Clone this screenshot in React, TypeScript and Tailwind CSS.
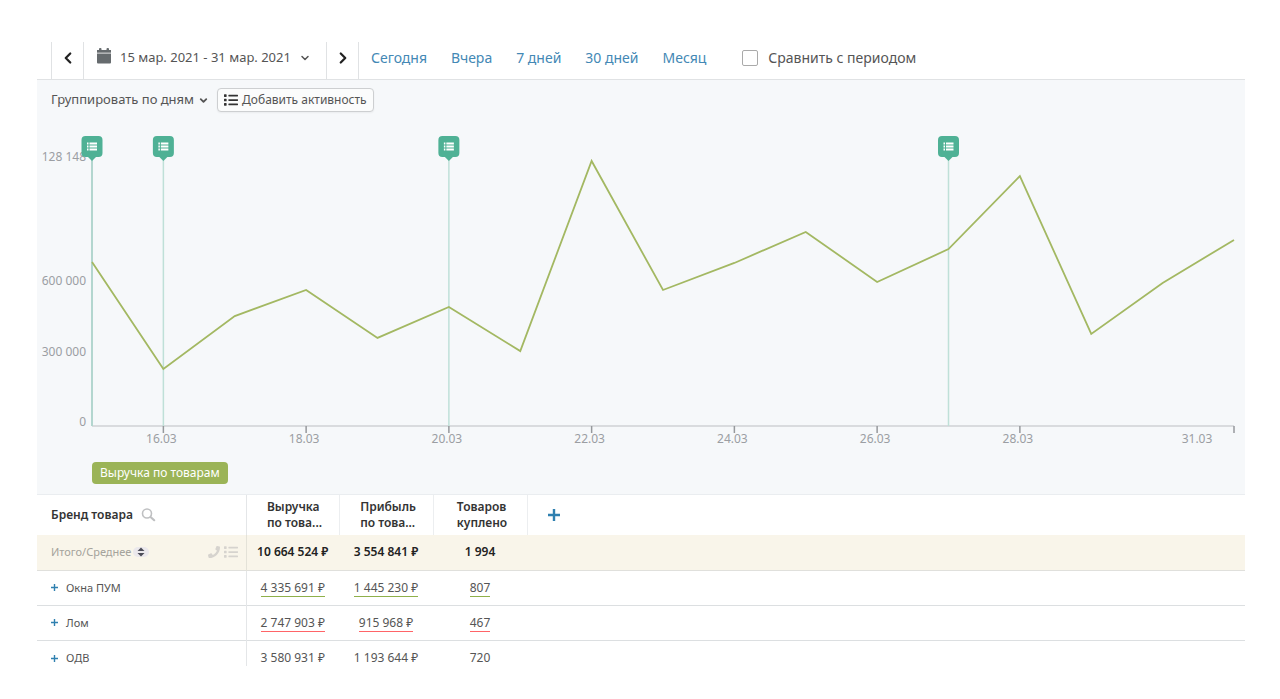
import { useState } from 'react';
import { ChevronDown, ChevronLeft, ChevronRight } from 'lucide-react';
import { FaList, FaPhone } from 'react-icons/fa';

type Trend = 'up' | 'down' | 'none';

interface BrandRow {
  name: string;
  values: string[];
  trend: Trend;
}

const periods = ['Сегодня', 'Вчера', '7 дней', '30 дней', 'Месяц'];

// Daily revenue, thousands of roubles, 15.03 - 31.03
const revenue = [698, 243, 468, 579, 375, 507, 319, 1128, 579, 694, 826, 613, 753, 1064, 392, 609, 792];
const activityDays = [0, 1, 5, 12];

const columns = [
  ['Выручка', 'по това...'],
  ['Прибыль', 'по това...'],
  ['Товаров', 'куплено']
];

const totals = ['10 664 524 ₽', '3 554 841 ₽', '1 994'];

const brands: BrandRow[] = [
  { name: 'Окна ПУМ', values: ['4 335 691 ₽', '1 445 230 ₽', '807'], trend: 'up' },
  { name: 'Лом', values: ['2 747 903 ₽', '915 968 ₽', '467'], trend: 'down' },
  { name: 'ОДВ', values: ['3 580 931 ₽', '1 193 644 ₽', '720'], trend: 'none' }
];

const trendClasses: Record<Trend, string> = {
  up: 'border-b border-[#8fb04a]',
  down: 'border-b border-red-400',
  none: ''
};

const CalendarIcon = () => (
  <svg width="16" height="16" viewBox="0 0 16 16" fill="#666b6e" className="mb-1" aria-hidden="true">
    <path d="M1 5.5h14v9a1 1 0 0 1-1 1H2a1 1 0 0 1-1-1z" />
    <path d="M1 2h14v2.700H1z" />
    <rect x="3" y="0" width="2.5" height="4" rx="1" />
    <rect x="10.500" y="0" width="2.5" height="4" rx="1" />
  </svg>
);

const SearchIcon = () => (
  <svg width="15" height="14" viewBox="0 0 15 14" fill="none" stroke="#bfc0c2" strokeLinecap="round" aria-hidden="true">
    <circle cx="6" cy="5.500" r="4.500" strokeWidth="1.600" />
    <path d="M9.800 9.200l3.400 3" strokeWidth="2.200" />
  </svg>
);

const PlusIcon = ({ size }: { size: number }) => (
  <svg width={size} height={size} viewBox="0 0 12 12" fill="#2f80b0" aria-hidden="true">
    <path d="M4.800 0h2.400v4.800H12v2.400H7.200V12H4.800V7.200H0V4.800h4.800z" />
  </svg>
);

const SortIcon = () => (
  <svg width="16" height="12" viewBox="0 0 16 12" aria-hidden="true">
    <rect y="1" width="16" height="10" rx="5" fill="#ebe8ec" />
    <path d="M8 1.500l3.500 3.500h-7zM8 10.500l3.500-3.500h-7z" fill="#4d4d59" />
  </svg>
);

const Toolbar = () => {
  const [compare, setCompare] = useState(false);

  return (
    <div className="flex h-[38px] items-stretch border-b border-[#e0e2e4] pl-3.5 text-[#555]">
      <button type="button" aria-label="Предыдущий период" className="flex w-8 items-center justify-center border-l border-[#e0e2e4] pb-1.5 text-[#222]">
        <ChevronLeft size={18} strokeWidth={3} />
      </button>
      <button type="button" className="flex w-[243px] items-center gap-2 border-l border-[#e0e2e4] pb-1.5 pl-3 text-[13px] whitespace-nowrap">
        <CalendarIcon />
        <span>15 мар. 2021 - 31 мар. 2021</span>
        <ChevronDown size={12} strokeWidth={3} />
      </button>
      <button type="button" aria-label="Следующий период" className="flex w-[33px] items-center justify-center border-x border-[#e0e2e4] pb-1.5 text-[#222]">
        <ChevronRight size={18} strokeWidth={3} />
      </button>
      <nav className="flex items-center gap-6 pb-1.5 pl-3 text-sm text-[#4388b5]">
        {periods.map((period) => (
          <a key={period} href="#" className="whitespace-nowrap">{period}</a>
        ))}
      </nav>
      <label className="flex items-center gap-2.5 pb-1.5 pl-9 text-sm whitespace-nowrap">
        <input
          type="checkbox"
          checked={compare}
          onChange={(e) => setCompare(e.target.checked)}
          className="h-4 w-4 appearance-none rounded-xs border border-[#aaa] bg-white checked:bg-[#4388b5]"
        />
        Сравнить с периодом
      </label>
    </div>
  );
};

const RevenueChart = () => {
  const left = 55;
  const base = 306;
  const step = 1142 / (revenue.length - 1);
  const px = (day: number) => left + day * step;
  const py = (value: number) => base - (value * 265) / 1128;
  const line = revenue.map((value, day) => `${px(day)},${py(value)}`).join(' ');
  const yLabels = [
    { text: '1 128 148', value: 1128 },
    { text: '600 000', value: 600 },
    { text: '300 000', value: 300 },
    { text: '0', value: 0 }
  ];
  const xLabels = [1, 3, 5, 7, 9, 11, 13];

  return (
    <svg viewBox="0 0 1208 330" className="block w-full" role="img" aria-label="Выручка по товарам">
      <g fill="#9b9ea3" fontSize="12">
        {yLabels.map((label) => (
          <text key={label.text} x="49" y={py(label.value)} textAnchor="end">{label.text}</text>
        ))}
        {xLabels.map((day) => (
          <text key={day} x={px(day) - 2} y="323" textAnchor="middle">{`${15 + day}.03`}</text>
        ))}
        <text x="1160" y="323" textAnchor="middle">31.03</text>
      </g>

      <path d={`M${left} ${base}H1197`} stroke="#cfd2d5" strokeWidth="1.5" />
      <g stroke="#96999c" strokeWidth="1.500">
        {[...xLabels, 16].map((day) => (
          <path key={day} d={`M${px(day)} ${base}v7`} />
        ))}
      </g>

      {activityDays.map((day) => (
        <path key={day} d={`M${px(day)} 40V${base}`} stroke={day === 0 ? '#b3d6cf' : '#bfe0d8'} strokeWidth={day === 0 ? 2 : 1.5} />
      ))}
      <polyline points={line} fill="none" stroke="#a3b862" strokeWidth="1.8" />

      {activityDays.map((day) => (
        <g key={day} transform={`translate(${px(day) - 10.5} 16)`}>
          <path d="M4 0h13a4 4 0 0 1 4 4v13a4 4 0 0 1-4 4h-2.500l-4 4-4-4H4a4 4 0 0 1-4-4V4a4 4 0 0 1 4-4z" fill="#4fb195" />
          <path d="M5.500 6.500h1.500v2h-1.500zm2.500 0h7.500v2h-7.500zm-2.500 3h1.500v2h-1.500zm2.500 0h7.500v2h-7.500zm-2.500 3h1.500v2h-1.500zm2.500 0h7.500v2h-7.500z" fill="#fff" />
        </g>
      ))}
    </svg>
  );
};

const BrandTable = () => (
  <table className="w-full table-fixed border-collapse text-xs text-[#555]">
    <colgroup>
      <col className="w-[209px]" />
      <col className="w-[93px]" />
      <col className="w-[94px]" />
      <col className="w-[94px]" />
      <col />
    </colgroup>
    <thead>
      <tr className="h-10 text-[#333]">
        <th className="border-r border-[#e4e6e8] pl-3.5 text-left font-semibold">
          <span className="flex items-center gap-2">
            Бренд товара
            <button type="button" aria-label="Поиск">
              <SearchIcon />
            </button>
          </span>
        </th>
        {columns.map(([first, second]) => (
          <th key={first} className="border-r border-[#eceef0] pl-1 leading-4 font-semibold">
            <span className="inline-block text-left">{first}<br />{second}</span>
          </th>
        ))}
        <th className="pl-5 text-left">
          <button type="button" aria-label="Добавить столбец" className="block">
            <PlusIcon size={12} />
          </button>
        </th>
      </tr>
    </thead>
    <tbody>
      <tr className="h-[35px] border-b border-[#e0e0dc] bg-[#f9f5ea]">
        <td className="border-r border-[#e4e2d8] pr-2 pl-3.5 text-[11px] text-[#a5a39c]">
          <span className="flex items-center gap-0.5">
            Итого/Среднее
            <SortIcon />
            <span className="ml-auto flex items-center gap-1 text-[#d6d3ce]">
              <FaPhone size={12} />
              <FaList size={14} />
            </span>
          </span>
        </td>
        {totals.map((total) => (
          <td key={total} className="text-center font-semibold whitespace-nowrap text-[#222]">{total}</td>
        ))}
        <td />
      </tr>
      {brands.map((brand) => (
        <tr key={brand.name} className="h-[35px] border-b border-[#dcdfe1] last:h-[26px] last:border-b-0 last:align-bottom">
          <td className="border-r border-[#e4e6e8] pl-3.5 text-[11px] leading-4">
            <span className="flex items-center gap-2">
              <button type="button" aria-label={`Развернуть ${brand.name}`}>
                <PlusIcon size={7} />
              </button>
              {brand.name}
            </span>
          </td>
          {brand.values.map((value) => (
            <td key={value} className="text-center whitespace-nowrap">
              <span className={trendClasses[brand.trend]}>{value}</span>
            </td>
          ))}
          <td />
        </tr>
      ))}
    </tbody>
  </table>
);

export default function App() {
  return (
    <main className="bg-white pt-[42px] pr-[35px] pb-8 pl-[37px] font-['Noto_Sans',sans-serif]">
      <Toolbar />
      <section className="border-b border-[#eaedf0] bg-[#f6f8fa]">
        <div className="flex h-10 items-center gap-2 pl-3.5 text-[13px] text-[#555]">
          <div className="flex items-center gap-1">
            <select aria-label="Группировка" className="field-sizing-content appearance-none bg-transparent">
              <option>Группировать по дням</option>
              <option>Группировать по неделям</option>
              <option>Группировать по месяцам</option>
            </select>
            <ChevronDown size={11} strokeWidth={4} />
          </div>
          <button type="button" className="flex h-6 items-center gap-1 rounded-sm border border-[#cdcfd1] bg-[#fbfcfc] px-1.5 text-xs whitespace-nowrap shadow-xs">
            <FaList size={14} className="text-[#333]" />
            Добавить активность
          </button>
        </div>
        <RevenueChart />
        <div className="px-[55px] pt-3 pb-2.5">
          <button type="button" className="block h-[22px] rounded-sm bg-[#9bb457] px-2 text-xs text-white">Выручка по товарам</button>
        </div>
      </section>
      <BrandTable />
    </main>
  );
}
